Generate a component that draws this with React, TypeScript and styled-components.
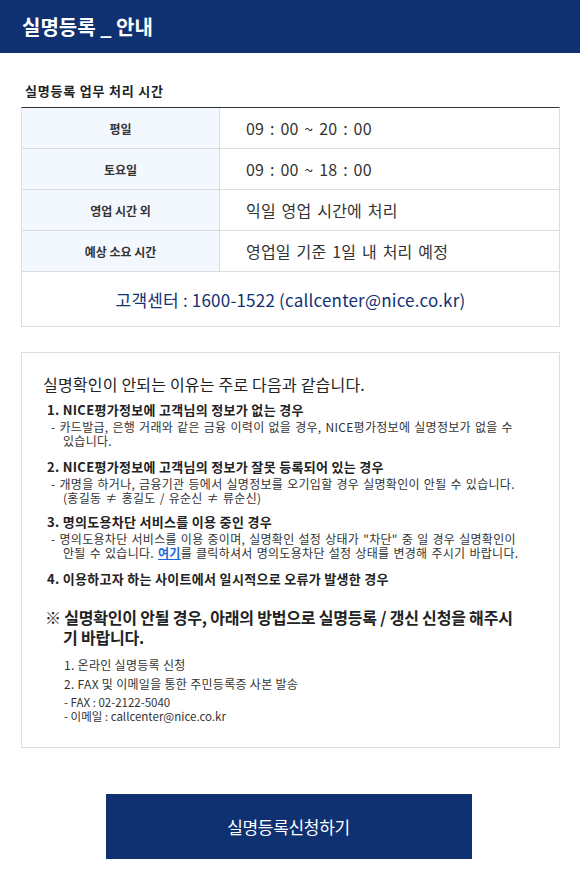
import React from "react";
import styled, { createGlobalStyle } from "styled-components";

const Global = createGlobalStyle`
  * { box-sizing: border-box; }
  html, body { margin: 0; padding: 0; background: #fff; }
  body {
    font-family: "Noto Sans CJK KR", "Noto Sans", "Liberation Sans", sans-serif;
    color: #333;
    width: 580px;
  }
`;

const Header = styled.header`
  height: 53px;
  background: #0f3172;
  display: flex;
  align-items: center;
  padding-left: 22px;
  color: #fff;
  font-size: 20px;
  font-weight: 700;
  letter-spacing: 0;
`;

const Content = styled.main`
  padding: 0 20px 0 21px;
`;

const SubTitle = styled.h2`
  margin: 29px 0 0 4px;
  font-size: 13px;
  line-height: 18px;
  font-weight: 700;
  color: #222;
  letter-spacing: 0.8px;
`;

const Table = styled.div`
  margin-top: 7px;
  border-top: 1px solid #333;
  border-left: 1px solid #ddd;
  border-right: 1px solid #ddd;
`;

const Row = styled.div`
  display: grid;
  grid-template-columns: 198px 1fr;
  height: 41px;
  border-bottom: 1px solid #ddd;
`;

const Label = styled.div`
  background: #f3f7fe;
  border-right: 1px solid #ddd;
  display: flex;
  align-items: center;
  justify-content: center;
  font-size: 12px;
  font-weight: 700;
  color: #333;
  letter-spacing: 0;
`;

const Value = styled.div`
  display: flex;
  align-items: center;
  padding-left: 26px;
  font-size: 16px;
  color: #333;
  letter-spacing: 0.2px;
  word-spacing: 2px;
`;

const CenterRow = styled.div`
  height: 55px;
  border-bottom: 1px solid #ddd;
  display: flex;
  align-items: center;
  justify-content: center;
  font-size: 17px;
  color: #123173;
  letter-spacing: 0.2px;
`;

const InfoBox = styled.section`
  margin-top: 25px;
  border: 1px solid #ddd;
  padding: 21px 18px 24px 21px;
`;

const InfoHeading = styled.h3`
  margin: 0;
  font-size: 16px;
  line-height: 20px;
  font-weight: 400;
  color: #222;
  letter-spacing: 0.2px;
`;

const ReasonList = styled.ol`
  list-style: none;
  margin: 8px 0 0 4px;
  padding: 0;
`;

const Reason = styled.li<{ $gap: number }>`
  margin-top: ${(p) => p.$gap}px;
`;

const ReasonTitle = styled.div`
  font-size: 13px;
  line-height: 16px;
  font-weight: 700;
  color: #222;
  letter-spacing: 0.3px;
`;

const ReasonDesc = styled.p`
  margin: 2px 0 0 4px;
  padding-left: 12px;
  text-indent: -12px;
  font-size: 12px;
  line-height: 14px;
  color: #333;
  letter-spacing: 0.3px;
  word-spacing: 1px;
  white-space: nowrap;
`;

const Link = styled.a`
  color: #1a6ad6;
  font-weight: 700;
  text-decoration: underline;
`;

const Notice = styled.p`
  margin: 20px 0 0 2px;
  padding-left: 18px;
  text-indent: -18px;
  font-size: 16px;
  line-height: 20px;
  font-weight: 700;
  color: #222;
  letter-spacing: -0.2px;
  white-space: nowrap;
`;

const MethodList = styled.div`
  margin: 10px 0 0 21px;
`;

const Method = styled.div<{ $gap: number }>`
  margin-top: ${(p) => p.$gap}px;
  font-size: 12px;
  line-height: 16px;
  color: #333;
  letter-spacing: 0.3px;
`;

const MethodSub = styled.div`
  margin-top: 3px;
  font-size: 11.5px;
  line-height: 14px;
  color: #333;
  letter-spacing: 0;
`;

const ButtonWrap = styled.div`
  display: flex;
  justify-content: center;
  padding: 46px 0 29px;
  margin-left: -4px;
`;

const ApplyButton = styled.button`
  width: 366px;
  height: 65px;
  border: none;
  background: #0f3172;
  color: #fff;
  font-family: inherit;
  font-size: 17px;
  letter-spacing: -0.3px;
  cursor: pointer;
`;

const hours = [
  ["평일", "09 : 00 ~ 20 : 00"],
  ["토요일", "09 : 00 ~ 18 : 00"],
  ["영업 시간 외", "익일 영업 시간에 처리"],
  ["예상 소요 시간", "영업일 기준 1일 내 처리 예정"],
];

export default function App() {
  return (
    <>
      <Global />
      <Header>실명등록 _ 안내</Header>
      <Content>
        <SubTitle>실명등록 업무 처리 시간</SubTitle>
        <Table>
          {hours.map(([l, v]) => (
            <Row key={l}>
              <Label>{l}</Label>
              <Value>{v}</Value>
            </Row>
          ))}
          <CenterRow>고객센터 : 1600-1522 (callcenter@nice.co.kr)</CenterRow>
        </Table>

        <InfoBox>
          <InfoHeading>실명확인이 안되는 이유는 주로 다음과 같습니다.</InfoHeading>
          <ReasonList>
            <Reason $gap={0}>
              <ReasonTitle>1. NICE평가정보에 고객님의 정보가 없는 경우</ReasonTitle>
              <ReasonDesc>
                - 카드발급, 은행 거래와 같은 금융 이력이 없을 경우, NICE평가정보에 실명정보가 없을 수
                <br />
                있습니다.
              </ReasonDesc>
            </Reason>
            <Reason $gap={11}>
              <ReasonTitle>2. NICE평가정보에 고객님의 정보가 잘못 등록되어 있는 경우</ReasonTitle>
              <ReasonDesc>
                - 개명을 하거나, 금융기관 등에서 실명정보를 오기입할 경우 실명확인이 안될 수 있습니다.
                <br />
                (홍길동 ≠ 홍길도 / 유순신 ≠ 류순신)
              </ReasonDesc>
            </Reason>
            <Reason $gap={9}>
              <ReasonTitle>3. 명의도용차단 서비스를 이용 중인 경우</ReasonTitle>
              <ReasonDesc>
                - 명의도용차단 서비스를 이용 중이며, 실명확인 설정 상태가 "차단" 중 일 경우 실명확인이
                <br />
                안될 수 있습니다. <Link href="#">여기</Link>를 클릭하셔서 명의도용차단 설정 상태를 변경해 주시기 바랍니다.
              </ReasonDesc>
            </Reason>
            <Reason $gap={11}>
              <ReasonTitle>4. 이용하고자 하는 사이트에서 일시적으로 오류가 발생한 경우</ReasonTitle>
            </Reason>
          </ReasonList>
          <Notice>
            ※ 실명확인이 안될 경우, 아래의 방법으로 실명등록 / 갱신 신청을 해주시
            <br />
            기 바랍니다.
          </Notice>
          <MethodList>
            <Method $gap={0}>1. 온라인 실명등록 신청</Method>
            <Method $gap={3}>2. FAX 및 이메일을 통한 주민등록증 사본 발송</Method>
            <MethodSub>
              - FAX : 02-2122-5040
              <br />
              - 이메일 : callcenter@nice.co.kr
            </MethodSub>
          </MethodList>
        </InfoBox>

        <ButtonWrap>
          <ApplyButton>실명등록신청하기</ApplyButton>
        </ButtonWrap>
      </Content>
    </>
  );
}
